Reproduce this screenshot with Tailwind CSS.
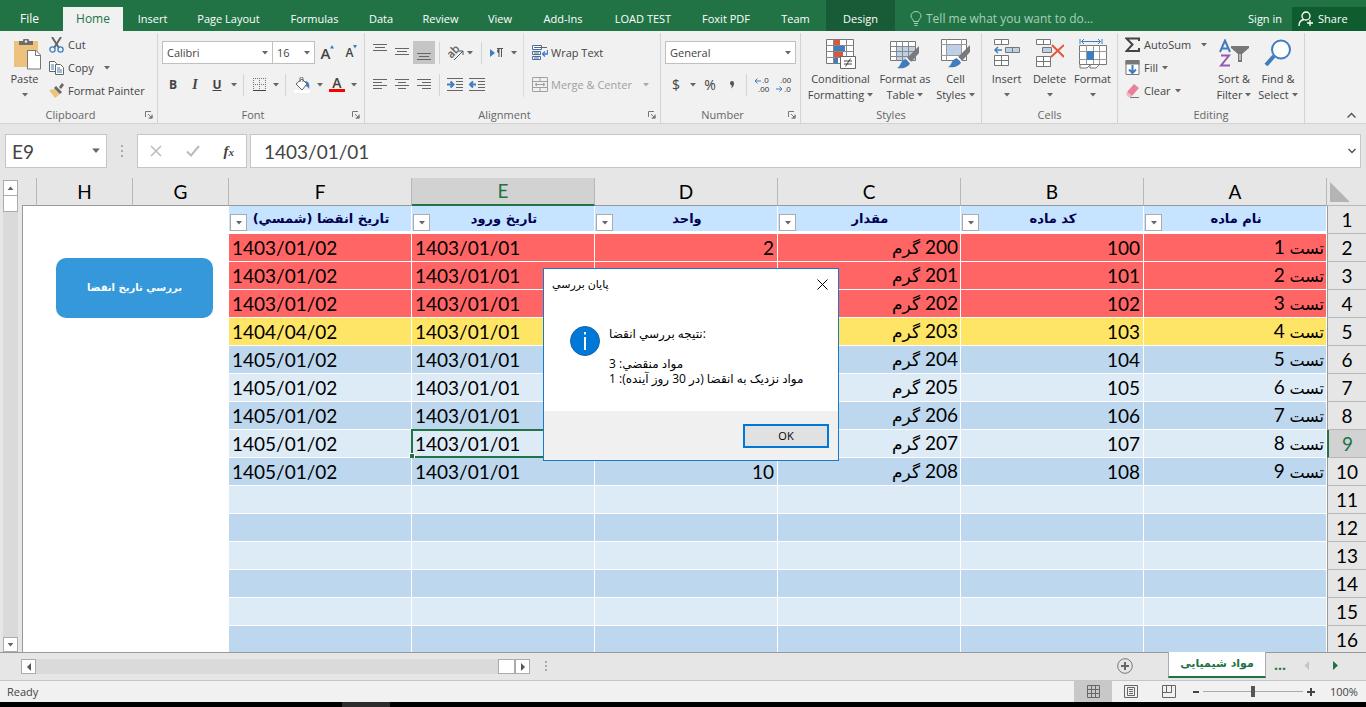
<!DOCTYPE html>
<html lang="en">
<head>
    <meta charset="UTF-8">
    <meta name="viewport" content="width=device-width, initial-scale=1.0">
    <title>Excel</title>
    <script src="https://cdn.jsdelivr.net/npm/@tailwindcss/browser@4"></script>
</head>
<body class="h-screen flex flex-col overflow-hidden relative bg-[#e6e6e6] text-[11px] leading-4 text-[#444] font-['Open_Sans','DejaVu_Sans',sans-serif]">

    <!-- shared icons -->
    <svg class="hidden">
        <symbol id="caret" viewBox="0 0 6 4"><path d="M0 0h6L3 3.5z" fill="#666"/></symbol>
        <symbol id="launcher" viewBox="0 0 8 8"><path d="M.5 6V.5H6M3 3l3.500 3.500M7 3.500V7H3.500" fill="none" stroke="#777"/><path d="M7.500 4v3.500H4z" fill="#777"/></symbol>
        <symbol id="brush" viewBox="0 0 24 24"><path d="M23 0v7l-8 9-4-4z" fill="#7a7a7a"/><path d="M10 13l4 4c-1 4-7 6-13 5 4-1 3-8 9-9z" fill="#3f7dbf"/><path d="M10 12l5 5" stroke="#fff" stroke-width="1.500"/></symbol>
    </svg>

    <!-- tabs -->
    <nav class="h-[31px] shrink-0 flex items-end bg-[#217346] text-white">
        <button class="w-[63px] h-6 pr-1 text-[12px]">File</button>
        <button class="w-[60px] h-6 bg-[#f1f1f1] text-[#217346] text-[12px]">Home</button>
        <button class="w-[59px] h-6">Insert</button>
        <button class="w-[93px] h-6">Page Layout</button>
        <button class="w-[79px] h-6">Formulas</button>
        <button class="w-[54px] h-6">Data</button>
        <button class="w-[65px] h-6">Review</button>
        <button class="w-[54px] h-6">View</button>
        <button class="w-[72px] h-6">Add-Ins</button>
        <button class="w-[88px] h-6">LOAD TEST</button>
        <button class="w-[78px] h-6">Foxit PDF</button>
        <button class="w-[61px] h-6">Team</button>
        <button class="w-[69px] h-[31px] pt-[7px] bg-[#185c37]">Design</button>
        <label class="h-6 ml-[15px] flex items-center gap-1 flex-1 text-[12px]">
            <svg class="w-3 h-4" viewBox="0 0 12 16" fill="none" stroke="#a6d0b7"><path d="M3.500 10.500C3.500 8 1 7.500 1 5a5 4.500 0 0 1 10 0c0 2.500-2.500 3-2.500 5.500zM4 12.500h4M4.500 14.500h3"/></svg>
            <input type="text" placeholder="Tell me what you want to do..." class="w-52 outline-none placeholder:text-[#a6d0b7]">
        </label>
        <button class="h-6 mr-2.5">Sign in</button>
        <button class="w-[74px] h-6 pl-1.5 flex items-center gap-1 bg-[#0f5c2f]">
            <svg class="w-4 h-4" viewBox="0 0 16 16" fill="none" stroke="#fff" stroke-width="1.300"><circle cx="8" cy="5" r="4"/><path d="M1 15c0-4 2-6 5-6.500M12 9v6M9 12h6"/></svg>Share
        </button>
    </nav>

    <!-- ribbon -->
    <section class="h-[93px] shrink-0 flex pt-0.5 bg-[#f1f1f1] border-b border-[#d2d2d2]">

        <div class="w-[158px] shrink-0 flex flex-col border-r border-[#d4d4d4]">
            <div class="h-[74px] shrink-0 flex">
                <button class="w-[49px] pt-1.5 flex flex-col items-center justify-start">
                    <svg class="w-7 h-8 ml-1 shrink-0" viewBox="0 0 28 32"><path d="M1 2h24v26H1z" fill="#ecc27c"/><path d="M6 6V2h4a3 3 0 0 1 6 0h4v4z" fill="#6d6d6d"/><circle cx="13" cy="2.500" r="1.200" fill="#f1f1f1"/><path d="M14.500 11.500H23l4.500 4.500v14h-13z" fill="#fff" stroke="#777"/><path d="M22.500 12v4.500H27" fill="none" stroke="#777"/></svg>
                    <span>Paste</span>
                    <svg class="w-1.5 h-1 mt-1.5"><use href="#caret"/></svg>
                </button>
                <div class="flex flex-col">
                    <button class="h-[23px] flex items-center gap-1"><svg class="w-[15px] h-4" viewBox="0 0 15 16" fill="none"><path d="M3 0l7 11M12 0L5 11" stroke="#666" stroke-width="2"/><circle cx="3.500" cy="12.500" r="2.600" stroke="#3f7dbf" stroke-width="1.300"/><circle cx="11.500" cy="12.500" r="2.600" stroke="#3f7dbf" stroke-width="1.300"/></svg>Cut</button>
                    <button class="h-[23px] flex items-center gap-1"><svg class="w-[15px] h-4" viewBox="0 0 15 16" fill="#fff" stroke="#666"><path d="M.5 1.500h5l2 2v8h-7z"/><path d="M6.500 4.500h5l3 3v7h-8z"/><path d="M2 5h3M2 7h3M2 9h3M8 8h3M8 10h5M8 12h5" stroke="#3f7dbf"/></svg>Copy<svg class="w-1.5 h-1 ml-1.5"><use href="#caret"/></svg></button>
                    <button class="h-[23px] flex items-center gap-1"><svg class="w-[15px] h-4" viewBox="0 0 15 16"><path d="M0 7l6-1 5 5-5 4z" fill="#ecc27c"/><path d="M5 5l2-2 6 6-2 2zM10 4l3-4 2 2-3 4z" fill="#666"/></svg>Format Painter</button>
                </div>
            </div>
            <div class="flex items-center text-[#666]"><span class="flex-1 pr-1 text-center">Clipboard</span><svg class="w-2 h-2 mr-1"><use href="#launcher"/></svg></div>
        </div>

        <div class="w-[207px] shrink-0 flex flex-col border-r border-[#d4d4d4]">
            <div class="h-[74px] shrink-0 pl-1">
                <div class="h-[39px] flex items-center">
                    <button class="w-[111px] h-[23px] px-1 flex items-center justify-between bg-white border border-[#c0c0c0]">Calibri<svg class="w-1.5 h-1"><use href="#caret"/></svg></button>
                    <button class="w-[43px] h-[23px] -ml-px px-1 flex items-center justify-between bg-white border border-[#c0c0c0]">16<svg class="w-1.5 h-1"><use href="#caret"/></svg></button>
                    <button class="w-[25px] flex justify-center items-start text-[15px] font-semibold">A<svg class="w-1 h-1"><path d="M0 3.500h4L2 0z" fill="#3f7dbf"/></svg></button>
                    <button class="w-[23px] flex justify-center items-start text-[12px] font-semibold">A<svg class="w-1 h-1"><path d="M0 0h4L2 3.500z" fill="#3f7dbf"/></svg></button>
                </div>
                <div class="h-[25px] flex items-center">
                    <button class="w-[22px] text-[12px] font-bold">B</button>
                    <button class="w-[22px] text-[14px] italic font-bold font-['Liberation_Serif',serif]">I</button>
                    <button class="w-[22px] text-[12px] font-bold underline">U</button>
                    <button class="w-[11px] flex justify-center"><svg class="w-1.5 h-1"><use href="#caret"/></svg></button>
                    <span class="w-px h-[22px] mx-1 bg-[#d4d4d4]"></span>
                    <button class="w-[22px] flex justify-center"><svg class="w-[13px] h-[13px]" viewBox="0 0 13 13" fill="none" stroke="#777"><path d="M.5 0v12M6.500 0v12M12.500 0v12M0 .5h13M0 6.500h13" stroke-dasharray="1 1"/><path d="M0 12.500h13" stroke="#444"/></svg></button>
                    <button class="w-[11px] flex justify-center"><svg class="w-1.5 h-1"><use href="#caret"/></svg></button>
                    <span class="w-px h-[22px] mx-1 bg-[#d4d4d4]"></span>
                    <button class="w-[24px] flex justify-center"><svg class="w-4 h-4" viewBox="0 0 16 16"><path d="M0 13h16v3H0z" fill="#fff"/><path d="M3 6l5-4 5 5-5 6-6-6z" fill="#fff" stroke="#666"/><path d="M6 5V1.500a1.500 1.500 0 0 1 3 0V5" fill="none" stroke="#666"/><path d="M11 4c4 0 5 4 4 8-1-2-2-3-4-3l2-2z" fill="#3f7dbf"/></svg></button>
                    <button class="w-[11px] flex justify-center"><svg class="w-1.5 h-1"><use href="#caret"/></svg></button>
                    <button class="w-[24px] flex flex-col items-center text-[14px] leading-3 font-semibold">A<span class="w-4 h-[3px] bg-[#f00]"></span></button>
                    <button class="w-[9px] flex justify-center"><svg class="w-1.5 h-1"><use href="#caret"/></svg></button>
                </div>
            </div>
            <div class="flex items-center text-[#666]"><span class="flex-1 pr-1 text-center">Font</span><svg class="w-2 h-2 mr-1"><use href="#launcher"/></svg></div>
        </div>

        <div class="w-[296px] shrink-0 flex flex-col border-r border-[#d4d4d4]">
            <div class="h-[74px] shrink-0 flex">
                <div class="w-[159px] h-16 pl-1 border-r border-[#dcdcdc]">
                    <div class="h-[39px] flex items-center">
                        <button class="w-[22px] h-[23px] flex justify-center"><svg class="w-[14px] h-[18px]" viewBox="0 0 14 18" stroke="#666"><path d="M0 3.500h14M2 6.500h10M0 9.500h14"/></svg></button>
                        <button class="w-[22px] h-[23px] flex justify-center"><svg class="w-[14px] h-[18px]" viewBox="0 0 14 18" stroke="#666"><path d="M0 7.500h14M2 10.500h10M0 13.500h14"/></svg></button>
                        <button class="w-[22px] h-[23px] flex justify-center bg-[#c5c5c5]"><svg class="w-[14px] h-[22px]" viewBox="0 0 14 22" stroke="#666"><path d="M0 12.500h14M2 15.500h10M0 18.500h14"/></svg></button>
                        <span class="w-px h-[22px] mx-1 bg-[#d4d4d4]"></span>
                        <button class="w-[23px] h-[23px] flex items-center justify-center"><svg class="w-4 h-4 overflow-visible" viewBox="0 0 16 16"><text x="0" y="10" font-size="11" fill="#555" stroke="#555" stroke-width=".3" transform="rotate(-45 6 8)">ab</text><path d="M6 15l9-9M15 10V6h-4" fill="none" stroke="#555"/></svg></button>
                        <svg class="w-1.5 h-1"><use href="#caret"/></svg>
                        <span class="w-px h-[22px] ml-2 mr-2 bg-[#d4d4d4]"></span>
                        <button class="h-[23px] flex items-center"><svg class="w-[13px] h-[10px]" viewBox="0 0 13 10"><path d="M0 1l5 4-5 4z" fill="#3f7dbf"/><path d="M9 9V1M11.500 9V1M7 .5h6" stroke="#555" fill="none"/><path d="M9 1a2 2 0 0 0 0 4z" fill="#555"/></svg></button>
                        <svg class="w-1.5 h-1 ml-2"><use href="#caret"/></svg>
                    </div>
                    <div class="h-[25px] flex items-center">
                        <button class="w-[22px] flex justify-center"><svg class="w-[14px] h-3" viewBox="0 0 14 12" stroke="#666"><path d="M0 .5h14M0 3.500h9M0 6.500h14M0 9.500h9"/></svg></button>
                        <button class="w-[22px] flex justify-center"><svg class="w-[14px] h-3" viewBox="0 0 14 12" stroke="#666"><path d="M0 .5h14M3 3.500h8M0 6.500h14M3 9.500h8"/></svg></button>
                        <button class="w-[22px] flex justify-center"><svg class="w-[14px] h-3" viewBox="0 0 14 12" stroke="#666"><path d="M0 .5h14M5 3.500h9M0 6.500h14M5 9.500h9"/></svg></button>
                        <span class="w-px h-[22px] mx-1 bg-[#d4d4d4]"></span>
                        <button class="w-[22px] flex justify-center"><svg class="w-4 h-[13px]" viewBox="0 0 16 13"><path d="M0 .5h16M9 3.500h7M9 6.500h7M9 9.500h7M0 12.500h16" stroke="#666"/><path d="M0 6.500h6M3.500 3.500l3 3-3 3" stroke="#3f7dbf" stroke-width="2" fill="none"/></svg></button>
                        <button class="w-[22px] flex justify-center"><svg class="w-4 h-[13px]" viewBox="0 0 16 13"><path d="M0 .5h16M9 3.500h7M9 6.500h7M9 9.500h7M0 12.500h16" stroke="#666"/><path d="M7 6.500H1M4 3.500l-3 3 3 3" stroke="#3f7dbf" stroke-width="2" fill="none"/></svg></button>
                    </div>
                </div>
                <div class="pl-2">
                    <button class="h-[39px] flex items-center gap-[3px]"><svg class="w-4 h-4" viewBox="0 0 16 16" fill="none"><path d="M.5 .5h9v4h-9zM.5 6.500h8v3h-8zM.5 11.500h8v3h-8z" fill="#fff" stroke="#3f6ea8"/><path d="M2 2.500h13M2 8h5M2 13h5" stroke="#666"/><path d="M15.500 5v4H11M13 6.500L10.500 9l2.500 2.500" stroke="#3f7dbf" stroke-width="1.300"/></svg>Wrap Text</button>
                    <button class="h-[25px] flex items-center gap-[3px] text-[#a0a0a0]"><svg class="w-4 h-4" viewBox="0 0 16 16" fill="none" stroke="#a0a0a0"><path d="M.5 .5h15v14H.5zM.5 4.500h15M.5 10.500h15M8 .5v4M8 10.500v4M3 7.500h10M5 6L3 7.500 5 9M11 6l2 1.500L11 9"/></svg>Merge &amp; Center<svg class="w-1.5 h-1 ml-2 opacity-50"><use href="#caret"/></svg></button>
                </div>
            </div>
            <div class="flex items-center text-[#666]"><span class="flex-1 pr-1 text-center">Alignment</span><svg class="w-2 h-2 mr-1"><use href="#launcher"/></svg></div>
        </div>

        <div class="w-[140px] shrink-0 flex flex-col border-r border-[#d4d4d4]">
            <div class="h-[74px] shrink-0 px-1">
                <div class="h-[39px] flex items-center">
                    <button class="w-full h-[23px] px-1 flex items-center justify-between bg-white border border-[#c0c0c0]">General<svg class="w-1.5 h-1"><use href="#caret"/></svg></button>
                </div>
                <div class="h-[25px] flex items-center">
                    <button class="w-[22px] text-[14px]">$</button>
                    <button class="w-[11px] flex justify-center"><svg class="w-1.5 h-1"><use href="#caret"/></svg></button>
                    <button class="w-[24px] text-[14px]">%</button>
                    <button class="w-[20px] flex justify-center"><svg class="w-1.5 h-2" viewBox="0 0 6 8"><path d="M1 2a2 2 0 0 1 4 0c0 3-1 4-3 5.500 1-2 1-3 0-3.500-.700-.5-1-1-1-2z" fill="#555"/></svg></button>
                    <span class="w-px h-[22px] mx-1 bg-[#d4d4d4]"></span>
                    <button class="w-[22px] flex justify-center font-['Liberation_Sans',sans-serif]"><svg class="w-4 h-4 overflow-visible" viewBox="0 0 16 16" font-size="8" fill="#333"><text x="8" y="6">.0</text><text x="4" y="15">.00</text><path d="M7 4H1M3.500 1.500L1 4l2.500 2.500" fill="none" stroke="#3f7dbf"/></svg></button>
                    <button class="w-[22px] flex justify-center font-['Liberation_Sans',sans-serif]"><svg class="w-4 h-4 overflow-visible" viewBox="0 0 16 16" font-size="8" fill="#333"><text x="4" y="6">.00</text><text x="8" y="15">.0</text><path d="M0 12h6M3.500 9.500L6 12l-2.500 2.500" fill="none" stroke="#3f7dbf"/></svg></button>
                </div>
            </div>
            <div class="flex items-center text-[#666]"><span class="flex-1 pr-1 text-center">Number</span><svg class="w-2 h-2 mr-1"><use href="#launcher"/></svg></div>
        </div>

        <div class="w-[181px] shrink-0 flex flex-col border-r border-[#d4d4d4]">
            <div class="h-[74px] shrink-0 flex">
                <button class="w-[79px] pt-1.5 flex flex-col items-center justify-start">
                    <svg class="w-[30px] h-8 shrink-0" viewBox="0 0 30 32"><path d="M.5 .5h27v24H.5z" fill="#fff" stroke="#777"/><path d="M8 1h6v5H8zM8 13h9v5H8z" fill="#d9573a"/><path d="M8 7h11v5H8zM8 19h4v5H8z" fill="#3f7dbf"/><path d="M7.500 0v25M20.500 0v25M0 6.500h28M0 12.500h28M0 18.500h28" stroke="#888"/><path d="M14.500 17.500h15v12h-15z" fill="#fff" stroke="#666"/><path d="M18 22h8M18 25h8M24.500 19.500l-5 8" stroke="#444"/></svg>
                    <span>Conditional</span>
                    <span class="flex items-center gap-[3px]">Formatting<svg class="w-1.5 h-1"><use href="#caret"/></svg></span>
                </button>
                <button class="w-[50px] pt-1.5 flex flex-col items-center justify-start whitespace-nowrap">
                    <svg class="w-[30px] h-8 shrink-0" viewBox="0 0 30 32"><path d="M.5 2.500h25v19H.5z" fill="#fff" stroke="#777"/><path d="M7 7h18v14H7z" fill="#bdd0e6"/><path d="M6.500 2v20M12.500 2v20M18.500 2v20M0 7.500h26M0 12.500h26M0 17.500h26" stroke="#888"/><use href="#brush" x="6" y="7" width="24" height="24"/></svg>
                    <span>Format as</span>
                    <span class="flex items-center gap-[3px]">Table<svg class="w-1.5 h-1"><use href="#caret"/></svg></span>
                </button>
                <button class="w-[51px] pt-1.5 flex flex-col items-center justify-start">
                    <svg class="w-[30px] h-8 shrink-0" viewBox="0 0 30 32"><path d="M.5 .5h25v21H.5z" fill="#fff" stroke="#777"/><path d="M5.500 0v22M20.500 0v22M0 5.500h26M0 16.500h26" stroke="#999"/><path d="M6 6h14v10H6z" fill="#bdd0e6"/><use href="#brush" x="6" y="6" width="24" height="24"/></svg>
                    <span>Cell</span>
                    <span class="flex items-center gap-[3px]">Styles<svg class="w-1.5 h-1"><use href="#caret"/></svg></span>
                </button>
            </div>
            <div class="text-center text-[#666]">Styles</div>
        </div>

        <div class="w-[136px] shrink-0 flex flex-col border-r border-[#d4d4d4]">
            <div class="h-[74px] shrink-0 px-[3px] flex">
                <button class="flex-1 pt-1.5 flex flex-col items-center justify-start">
                    <svg class="w-7 h-8 shrink-0" viewBox="0 0 28 32"><path d="M1.500 .5h14v5h-14zM8.500 .5v5M1.500 16.500h14v10h-14zM8.500 16.500v10M1.500 21.500h14" fill="#fff" stroke="#777"/><path d="M12.500 8.500h14v5h-14zM19.500 8.500v5" fill="#bdd0e6" stroke="#777"/><path d="M9 11H2M5 8l-3 3 3 3" fill="none" stroke="#3f7dbf" stroke-width="1.500"/></svg>
                    <span>Insert</span>
                    <svg class="w-1.5 h-1 mt-1.5"><use href="#caret"/></svg>
                </button>
                <button class="flex-1 pt-1.5 flex flex-col items-center justify-start">
                    <svg class="w-7 h-8 shrink-0" viewBox="0 0 28 32"><path d="M.5 .5h14v5H.5zM7.500 .5v5M.5 17.500h14v10H.5zM7.500 17.500v10M.5 22.500h14" fill="#fff" stroke="#777"/><path d="M6.500 8.500h9v5h-9z" fill="#bdd0e6" stroke="#777"/><path d="M16 6l12 12M28 6L15 18" stroke="#e0583a" stroke-width="2"/></svg>
                    <span>Delete</span>
                    <svg class="w-1.5 h-1 mt-1.5"><use href="#caret"/></svg>
                </button>
                <button class="flex-1 pt-1.5 flex flex-col items-center justify-start">
                    <svg class="w-7 h-8 shrink-0" viewBox="0 0 28 32"><path d="M.5 6.500h27v19H.5z" fill="#fff" stroke="#777"/><path d="M7.500 6v19M14.500 6v19M20.500 6v19M0 12.500h28M0 20.500h28" stroke="#999"/><path d="M8 12h7v9H8z" fill="#3f7dbf"/><path d="M1 0v5M23 0v5M3 2.500h18M5 0L2.500 2.500 5 5M19 0l2.500 2.500L19 5" fill="none" stroke="#3f7dbf"/><path d="M1 26v3h7l3-3M11 26v3h6l3-3" fill="#fff" stroke="#777"/></svg>
                    <span>Format</span>
                    <svg class="w-1.5 h-1 mt-1.5"><use href="#caret"/></svg>
                </button>
            </div>
            <div class="text-center text-[#666]">Cells</div>
        </div>

        <div class="w-[187px] shrink-0 flex flex-col border-r border-[#d4d4d4]">
            <div class="h-[74px] shrink-0 flex">
                <div class="w-[94px] pl-[7px] flex flex-col">
                    <button class="h-[23px] flex items-center gap-1"><svg class="w-[15px] h-4" viewBox="0 0 15 16"><path d="M14 4V1.500H1.500l6 6-6 6.500H14v-3" fill="none" stroke="#444" stroke-width="2"/></svg>AutoSum<svg class="w-1.5 h-1 ml-1.5"><use href="#caret"/></svg></button>
                    <button class="h-[23px] flex items-center gap-1"><svg class="w-[15px] h-4" viewBox="0 0 15 16"><path d="M1 .5h13v14H1z" fill="#fff" stroke="#777"/><path d="M.5 .5h14v4H.5z" fill="#777"/><path d="M7.500 5v8M4 9.500L7.500 13 11 9.500" fill="none" stroke="#3f7dbf" stroke-width="2"/></svg>Fill<svg class="w-1.5 h-1"><use href="#caret"/></svg></button>
                    <button class="h-[23px] flex items-center gap-1"><svg class="w-[15px] h-4" viewBox="0 0 15 16"><path d="M9 1l5 4-7 8-5-4z" fill="#e8829a"/><path d="M2 9l5 4-1 1H3l-2-3z" fill="#f3b6c3"/><path d="M5 14.500h9" stroke="#777"/></svg>Clear<svg class="w-1.5 h-1"><use href="#caret"/></svg></button>
                </div>
                <button class="w-[44px] pt-1.5 flex flex-col items-center justify-start">
                    <svg class="w-[30px] h-8 shrink-0" viewBox="0 0 30 32" fill="none"><path d="M1 13L6 1.500 11 13M3 9.500h6" stroke="#3f7dbf" stroke-width="2"/><path d="M2 16.500h8l-8 10h9" stroke="#9657b5" stroke-width="2"/><path d="M12 7h18v2l-7 6v8h-4v-8l-7-6z" fill="#777"/><path d="M21 15v6" stroke="#fff"/></svg>
                    <span class="whitespace-nowrap">Sort &amp;</span>
                    <span class="flex items-center gap-[3px]">Filter<svg class="w-1.5 h-1"><use href="#caret"/></svg></span>
                </button>
                <button class="w-[44px] pt-1.5 flex flex-col items-center justify-start">
                    <svg class="w-[30px] h-8 shrink-0" viewBox="0 0 30 32"><path d="M11 17L3 26" stroke="#3f7dbf" stroke-width="4"/><circle cx="18" cy="10.500" r="9" fill="#fff" stroke="#3f7dbf" stroke-width="2"/></svg>
                    <span class="whitespace-nowrap">Find &amp;</span>
                    <span class="flex items-center gap-[3px]">Select<svg class="w-1.5 h-1"><use href="#caret"/></svg></span>
                </button>
            </div>
            <div class="text-center text-[#666]">Editing</div>
        </div>

        <div class="flex-1 flex items-end justify-end pr-2.5 pb-1">
            <button><svg class="w-[9px] h-2" viewBox="0 0 9 8"><path d="M.5 6.500l4-4 4 4" fill="none" stroke="#555" stroke-width="1.500"/></svg></button>
        </div>
    </section>

    <!-- formula bar -->
    <section class="h-[54px] shrink-0 flex items-center px-[5px]">
        <div class="w-[102px] h-[34px] flex items-center pr-1.5 bg-white border border-[#c6c6c6]">
            <input type="text" value="E9" aria-label="Name box" class="w-full min-w-0 pl-1.5 text-[19px] font-[Lato,sans-serif] outline-none">
            <svg class="w-2 h-1.5 shrink-0" viewBox="0 0 6 4"><use href="#caret"/></svg>
        </div>
        <svg class="w-[30px] h-3" viewBox="0 0 30 12" fill="#aaa"><path d="M14 0h2v2h-2zM14 5h2v2h-2zM14 10h2v2h-2z"/></svg>
        <div class="w-[110px] h-[34px] flex items-center justify-around bg-white border border-[#c6c6c6]">
            <button aria-label="Cancel"><svg class="w-3 h-3" viewBox="0 0 12 12"><path d="M1 1l10 10M11 1L1 11" stroke="#bbb" stroke-width="1.500"/></svg></button>
            <button aria-label="Enter"><svg class="w-[14px] h-3" viewBox="0 0 14 12"><path d="M1 6.500l4 4L13 1" fill="none" stroke="#bbb" stroke-width="2"/></svg></button>
            <button class="text-[15px] italic font-bold font-['Liberation_Serif',serif]">f<span class="text-[11px]">x</span></button>
        </div>
        <div class="flex-1 ml-[3px] h-[34px] flex items-center pr-1 bg-white border border-[#c6c6c6]">
            <input type="text" value="1403/01/01" aria-label="Formula bar" class="flex-1 pl-[13px] text-[19px] font-[Lato,sans-serif] outline-none">
            <svg class="w-2 h-1.5" viewBox="0 0 8 6"><path d="M.5 1L4 4.500 7.500 1" fill="none" stroke="#555" stroke-width="1.500"/></svg>
        </div>
    </section>

    <!-- sheet -->
    <main class="flex-1 min-h-0 flex relative overflow-hidden border-b border-[#999]">
        <div class="w-[22px] shrink-0 pt-0.5 pl-[3px] flex flex-col">
            <button class="w-[15px] h-4 flex items-center justify-center bg-white border border-[#ababab]"><svg class="w-[7px] h-1" viewBox="0 0 6 4"><path d="M0 4h6L3 .5z" fill="#666"/></svg></button>
            <div class="w-[15px] h-[17px] -mt-px bg-white border border-[#ababab]"></div>
            <div class="w-[15px] flex-1 bg-[#dadada]"></div>
            <button class="w-[15px] h-[15px] flex items-center justify-center bg-white border border-[#ababab]"><svg class="w-[7px] h-1" viewBox="0 0 6 4"><use href="#caret"/></svg></button>
        </div>
        <div class="flex-1 min-w-0">
            <table class="w-full table-fixed border-separate border-spacing-0 text-[19px] text-black font-[Lato,'DejaVu_Sans',sans-serif]">
                <colgroup>
                    <col><col class="w-24"><col class="w-24">
                    <col class="w-[183px]"><col class="w-[183px]"><col class="w-[183px]"><col class="w-[183px]"><col class="w-[183px]"><col class="w-[183px]">
                    <col class="w-[39px]">
                </colgroup>
                <thead><tr id="letters"></tr></thead>
                <tbody id="rows"></tbody>
            </table>
        </div>
        <button dir="rtl" class="absolute left-14 top-20 w-[157px] h-[60px] rounded-[10px] bg-[#3498db] text-white text-[10px] font-bold font-['DejaVu_Sans',sans-serif]">بررسي تاريخ انقضا</button>
    </main>

    <!-- sheet tabs -->
    <section class="h-[27px] shrink-0 flex items-start">
        <div class="flex pl-[21px] pt-1.5">
            <button class="w-[15px] h-[15px] flex items-center justify-center bg-white border border-[#ababab]"><svg class="w-1 h-2" viewBox="0 0 4 8"><path d="M4 0v8L0 4z" fill="#555"/></svg></button>
            <div class="w-[462px] h-[15px] bg-[#dadada]"></div>
            <div class="w-[17px] h-[15px] bg-white border border-[#ababab]"></div>
            <button class="w-[15px] h-[15px] flex items-center justify-center bg-white border border-[#ababab]"><svg class="w-1 h-2" viewBox="0 0 4 8"><path d="M0 0v8l4-4z" fill="#555"/></svg></button>
            <svg class="w-[32px] h-[15px]" viewBox="0 0 32 15" fill="#aaa"><path d="M15 2h2v2h-2zM15 6h2v2h-2zM15 10h2v2h-2z"/></svg>
        </div>
        <div class="flex-1 flex justify-end items-start">
            <button aria-label="New sheet" class="mt-[5px] mr-[35px]"><svg class="w-4 h-4" viewBox="0 0 16 16" fill="none"><circle cx="8" cy="8" r="7.300" stroke="#777"/><path d="M8 4v8M4 8h8" stroke="#666" stroke-width="2"/></svg></button>
            <button dir="rtl" class="relative -mt-px w-[98px] h-[26px] bg-white border-x border-[#ababab] border-b-2 border-b-[#217346] text-[#217346] text-[11px] font-bold font-['DejaVu_Sans',sans-serif]">مواد شیمیایی</button>
            <span class="w-7 pt-1 text-center text-[14px] leading-4 font-bold text-[#217346]">...</span>
            <svg class="w-[72px] h-[25px]" viewBox="0 0 72 25"><path d="M15 8v9l-4.500-4.500z" fill="#c4c4c4"/><path d="M39 8v9l5-4.500z" fill="#217346"/></svg>
        </div>
    </section>

    <!-- status bar -->
    <footer class="h-[22px] shrink-0 flex items-center bg-[#f1f1f1] border-t border-[#c6c6c6]">
        <span class="flex-1 pl-[7px]">Ready</span>
        <button class="w-[38px] h-full flex items-center justify-center bg-[#c8c8c8]"><svg class="w-[13px] h-[13px]" viewBox="0 0 13 13" fill="none" stroke="#666"><path d="M.5 .5h12v12H.5zM4.500 0v13M8.500 0v13M0 4.500h13M0 8.500h13"/></svg></button>
        <button class="w-[38px] h-full flex items-center justify-center"><svg class="w-[14px] h-[13px]" viewBox="0 0 14 13" fill="none" stroke="#666"><path d="M.5 .5h13v12H.5zM3.500 2.500h7v8h-7zM5 4.500h4M5 6.500h4M5 8.500h4"/></svg></button>
        <button class="w-[38px] h-full flex items-center justify-center"><svg class="w-[14px] h-[13px]" viewBox="0 0 14 13" fill="none" stroke="#666"><path d="M.5 .5h13v12H.5zM4.500 .5v7h5v-7M.5 7.500h9"/></svg></button>
        <button aria-label="Zoom out" class="w-[15px] flex justify-center"><svg class="w-1.5 h-2" viewBox="0 0 6 8"><path d="M0 4h6" stroke="#444" stroke-width="2"/></svg></button>
        <input type="range" min="0" max="200" value="100" aria-label="Zoom" class="w-[100px] h-3 appearance-none bg-[linear-gradient(#aaa,#aaa)] bg-[length:100%_1px] bg-center bg-no-repeat [&::-webkit-slider-thumb]:appearance-none [&::-webkit-slider-thumb]:w-1 [&::-webkit-slider-thumb]:h-[11px] [&::-webkit-slider-thumb]:bg-[#555]">
        <button aria-label="Zoom in" class="w-[16px] flex justify-center"><svg class="w-2 h-2" viewBox="0 0 8 8"><path d="M0 4h8M4 0v8" stroke="#444" stroke-width="2"/></svg></button>
        <span class="w-[47px] pl-[11px]">100%</span>
    </footer>
    <div class="h-[5px] shrink-0 bg-black"><div class="ml-[342px] w-12 h-full bg-[#2d2d2d]"></div></div>

    <!-- message box -->
    <div role="dialog" aria-labelledby="boxTitle" class="absolute left-[543px] top-[268px] w-[296px] bg-white border border-[#1979ca] text-black">
        <div class="h-[30px] flex items-center justify-between pl-2 pr-2.5">
            <h1 id="boxTitle">پايان بررسي</h1>
            <button aria-label="Close"><svg class="w-[11px] h-[11px]" viewBox="0 0 11 11"><path d="M.5 .5l10 10M10.500 .5l-10 10" stroke="#000"/></svg></button>
        </div>
        <div class="h-[112px] pl-[26px] pt-[27px] flex">
            <svg class="w-[30px] h-[30px] shrink-0" viewBox="0 0 30 30"><circle cx="15" cy="15" r="14.500" fill="#0078d7" stroke="#1762a3"/><path d="M14 6h2v2.500h-2zM14 11h2v13h-2z" fill="#fff"/></svg>
            <p class="pl-[9px] text-[12px] leading-[15px] whitespace-nowrap">نتيجه بررسي انقضا:<br><br>مواد منقضي: 3<br>مواد نزديک به انقضا (در 30 روز آينده): 1</p>
        </div>
        <div class="h-[49px] flex items-center justify-end pr-[9px] bg-[#f0f0f0]">
            <button class="w-[86px] h-6 bg-[#e1e1e1] border-2 border-[#0078d7]">OK</button>
        </div>
    </div>

    <script>
        const letters = ['', 'H', 'G', 'F', 'E', 'D', 'C', 'B', 'A'];
        const titles = ['تاريخ انقضا (شمسي)', 'تاريخ ورود', 'واحد', 'مقدار', 'کد ماده', 'نام ماده'];
        const expiry = ['1403/01/02', '1403/01/02', '1403/01/02', '1404/04/02', '1405/01/02', '1405/01/02', '1405/01/02', '1405/01/02', '1405/01/02'];
        const units = [2, '', '', '', '', '', '', '', 10];

        document.getElementById('letters').innerHTML = letters.map((l) => {
            const look = l === 'E'
                ? 'bg-[#d2d2d2] text-[#217346] border-b-2 border-b-[#217346]'
                : 'border-b border-b-[#999]';
            return `<th class="h-7 p-0 leading-6 font-normal border-r border-r-[#b8b8b8] ${look}">${l}</th>`;
        }).join('') + `<th class="h-7 p-0 border-b border-b-[#b8b8b8]"><svg class="w-5 h-5 ml-[3px]" viewBox="0 0 20 20"><path d="M0 0v20h20z" fill="#b4b4b4"/></svg></th>`;

        let html = '';
        for (let row = 1; row <= 16; row++) {
            html += '<tr><td class="h-7 bg-white border-l border-[#999]"></td><td class="bg-white"></td><td class="bg-white"></td>';

            if (row === 1) {
                html += titles.map((t) => `<th dir="rtl" class="relative h-7 p-0 text-[13px] leading-5 text-[#000050] bg-[#c6e3ff] border-r border-b-3 border-white font-['DejaVu_Sans',sans-serif]">${t}
                    <button aria-label="Filter" class="absolute left-0 bottom-0 w-[17px] h-[17px] flex items-center justify-center bg-white border border-[#ababab]"><svg class="w-1.5 h-1"><use href="#caret"/></svg></button></th>`).join('');
            } else {
                // expired red, near expiry yellow, the rest banded
                let bg = row % 2 ? 'bg-[#ddebf7]' : 'bg-[#bdd7ee]';
                if (row <= 4) bg = 'bg-[#ff6565]';
                if (row === 5) bg = 'bg-[#ffe566]';
                const n = row - 2;
                const cells = row <= 10
                    ? [expiry[n], '1403/01/01', units[n], `${200 + n} <span class="text-[17px]">گرم</span>`, 100 + n, `<span class="text-[16px]">تست</span> ${n + 1}`]
                    : ['', '', '', '', '', ''];
                cells.forEach((c, i) => {
                    const side = i < 2 ? 'text-left' : 'text-right';
                    const dir = i === 3 || i === 5 ? 'rtl' : 'ltr';
                    const sel = row === 9 && i === 1
                        ? '<span class="absolute -inset-px border-2 border-[#217346]"></span><span class="absolute -left-[3px] -bottom-0.5 w-1.5 h-1.5 bg-[#217346] border border-white"></span>'
                        : '';
                    html += `<td dir="${dir}" class="relative h-7 p-0 px-[3px] leading-6 whitespace-nowrap border-r border-b border-white ${bg} ${side}">${c}${sel}</td>`;
                });
            }
            const num = row === 9
                ? 'bg-[#d2d2d2] text-[#217346] border-l-2 border-l-[#217346]'
                : 'border-l border-l-[#999]';
            html += `<th class="h-7 p-0 leading-6 font-normal border-b border-b-[#b8b8b8] ${num}">${row}</th></tr>`;
        }
        document.getElementById('rows').innerHTML = html;
    </script>
</body>
</html>
